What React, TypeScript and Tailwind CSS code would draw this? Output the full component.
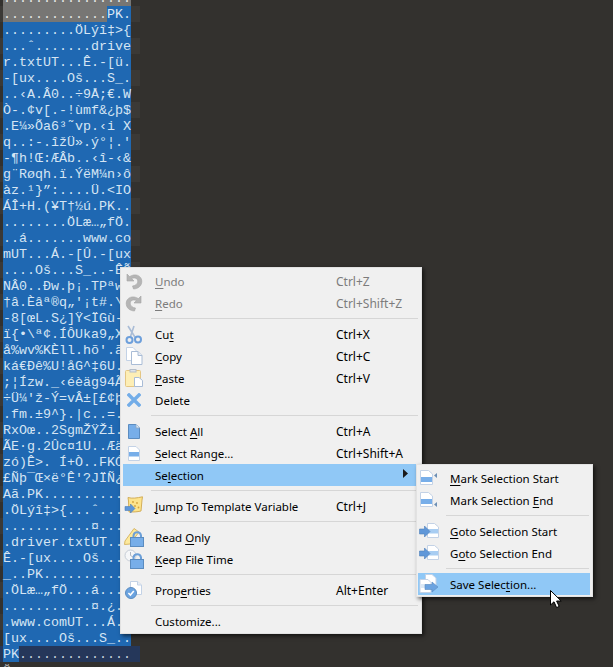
import React from "react";

const rows = [
  "................",
  ".............PK.",
  ".........ÖLýî‡>{",
  "...ˆ.......drive",
  "r.txtUT...Ê.-[ü.",
  "-[ux....Oš...S_.",
  "..‹A.Â0..÷9Å;€.W",
  "Ò-.¢v[.-!ùmf&¿þ$",
  ".E¼»Õa6³˜vp.‹i X",
  "q..:-.îžÜ».ý°¦.'",
  "-¶h!Œ:ÆÂb..‹î-‹&",
  "g¨Røqh.ï.ÝëM¼n›ô",
  "àz.¹}”:....Ü.<IO",
  "ÁÎ+H.(¥T†½ú.PK..",
  "........ÖLæ…„fÖ.",
  "..á.......www.co",
  "mUT...Á.-[Û.-[ux",
  "....Oš...S_..-ÊÕ",
  "NÂ0..Ðw.þ¡.TPªw.",
  "†â.Èâª®q„'¡t#.\\.",
  "-8[œL.S¿]Ÿ<ÏGù-.",
  "ï{•\\ª¢.ÍÔUka9„X.",
  "å%wv%KÈll.hõ'.ã.",
  "ká€Ðê%U!åG^‡6U..",
  ";¦Ízw._‹éèäg94Ã",
  "÷Ü¼'ž-Ý=vÂ±[£¢þ",
  ".fm.±9^}.|c..=..",
  "RxOœ..2SgmŽŸŽi..",
  "ÃE·g.2Ûc¤1U..Æä",
  "zó)Ê>. Í+Ò..FKÓ.",
  "£Ñþ¯Œ×ë°Ê'?JÏÑ¿",
  "Aã.PK...........",
  ".ÖLýî‡>{...ˆ....",
  "...........¤....",
  ".driver.txtUT...",
  "Ê.-[ux....Oš....",
  "_..PK...........",
  ".ÖLæ…„fÖ...á....",
  "...........¤.¿..",
  ".www.comUT...Á.-",
  "[ux....Oš...S_..",
];

function HexRow({ text, index }: { text: string; index: number }) {
  const striped = index % 2 === 1;
  let body: React.ReactNode;
  if (index === 0) {
    body = <span className="block h-4 w-[128px] bg-[#777674] text-[#e6e6e6]">{text}</span>;
  } else if (index === 1) {
    body = (
      <span className="flex h-4 w-[128px]">
        <span className="bg-[#777674] text-[#e6e6e6]">{text.slice(0, 13)}</span>
        <span className="bg-[#1f68b2] text-[#dbe9f6]">{text.slice(13)}</span>
      </span>
    );
  } else {
    body = <span className="block h-4 w-[128px] bg-[#1f68b2] text-[#d5e5f4]">{text}</span>;
  }
  return (
    <div className={`h-4 w-[140px] pl-[3px] ${striped ? "bg-[#3b3936]" : ""}`}>{body}</div>
  );
}

const P = "#c3d2e6";

function Undo({ flip }: { flip?: boolean }) {
  return (
    <svg width="18" height="18" viewBox="0 0 18 18" style={flip ? { transform: "scaleX(-1)" } : undefined}>
      <path d="M2 2 L2 9 L9 9 L6.6 6.6 C9 5.2 12.6 6 12.8 9 C13 11.8 10.5 13.6 7.5 14 L8.5 17 C13 16.8 17 14 16.8 9 C16.5 3.4 10 1 4.6 4.6 Z" fill="#b5b5b5" stroke="#a4a4a4" strokeWidth="0.6" />
    </svg>
  );
}
function Cut() {
  return (
    <svg width="18" height="19" viewBox="0 0 18 19" fill="none">
      <path d="M3 1 L10.5 13 M9 1 L5 13" stroke="#a9bcd6" strokeWidth="1.6" />
      <circle cx="4.5" cy="15" r="3" stroke="#6d9fdb" strokeWidth="2" />
      <circle cx="13" cy="14.5" r="3" stroke="#6d9fdb" strokeWidth="2" />
    </svg>
  );
}
function Copy() {
  return (
    <svg width="18" height="18" viewBox="0 0 18 18">
      <path d="M1.5 0.5 H8 L11 3.5 V13.5 H1.5 Z" fill="#fff" stroke={P} />
      <path d="M6.5 4.5 H13 L17 8.5 V17.5 H6.5 Z" fill="#fff" stroke="#a9bcd6" />
      <path d="M13 4.5 V8.5 H17" fill="#e5ebf3" stroke="#a9bcd6" />
    </svg>
  );
}
function Paste() {
  return (
    <svg width="18" height="18" viewBox="0 0 18 18">
      <rect x="0.5" y="1.5" width="15" height="16" rx="1" fill="#fdeeb5" stroke="#e4c684" />
      <rect x="5" y="0.5" width="6" height="2.5" fill="#dfe4ea" stroke="#b4bdc9" />
      <path d="M9.5 8.5 H14 L17.5 11.5 V17.5 H9.5 Z" fill="#fff" stroke="#a9bcd6" />
    </svg>
  );
}
function Delete() {
  return (
    <svg width="14" height="14" viewBox="0 0 14 14">
      <path d="M2 2 L12 12 M12 2 L2 12" stroke="#73ade8" strokeWidth="3.4" strokeLinecap="square" />
    </svg>
  );
}
function PageBlue() {
  return (
    <svg width="12" height="15" viewBox="0 0 12 15">
      <path d="M0.5 0.5 H8 L11.5 4 V14.5 H0.5 Z" fill="#77aee9" stroke="#5b8cc0" />
      <path d="M8 0.5 V4 H11.5" fill="#e8f0f8" stroke="#8aa7c7" />
    </svg>
  );
}
function PageRange() {
  return (
    <svg width="12" height="15" viewBox="0 0 12 15">
      <path d="M0.5 0.5 H8 L11.5 4 V14.5 H0.5 Z" fill="#fff" stroke={P} />
      <rect x="1" y="6" width="10" height="4.5" fill="#77aee9" />
    </svg>
  );
}
function Jump() {
  return (
    <svg width="20" height="20" viewBox="0 0 20 20">
      <path d="M4 1.5 C8 2.8 13 2 18.5 0.8 L18 4 L17 15 C13 16 9.5 16 5 16 L4.5 5 Z" fill="#fde48c" stroke="#d3ae58" />
      <circle cx="9" cy="6" r="0.9" fill="#d4a33c" />
      <circle cx="13" cy="7" r="0.9" fill="#d4a33c" />
      <circle cx="11" cy="10" r="0.9" fill="#d4a33c" />
      <circle cx="14.5" cy="11.5" r="0.9" fill="#d4a33c" />
      <path d="M6.5 8 L11 12.5 L6.5 17 V14.5 H1 V10.5 H6.5 Z" fill="#5f97d9" stroke="#4f7fb8" strokeWidth="0.6" />
    </svg>
  );
}
function Lock() {
  return (
    <>
      <path d="M9.5 11 V8.5 A3.8 3.8 0 0 1 17 8.5 V11" fill="none" stroke="#6b9fd8" strokeWidth="2" />
      <rect x="6.5" y="10.5" width="13" height="9" fill="#77aee9" stroke="#5b8cc0" />
    </>
  );
}
function ReadOnly() {
  return (
    <svg width="20" height="20" viewBox="0 0 20 20">
      <path d="M1 14 L10 1.5 L15 5 L6 17 L0.5 17.5 Z" fill="#fde99c" stroke="#d8b868" />
      <Lock />
    </svg>
  );
}
function KeepTime() {
  return (
    <svg width="20" height="20" viewBox="0 0 20 20">
      <circle cx="6.5" cy="6.5" r="5.5" fill="#f5f6f8" stroke="#c6cdd6" />
      <path d="M6.5 3 V6.5 L9 8" fill="none" stroke="#aeb7c2" />
      <Lock />
    </svg>
  );
}
function Props() {
  return (
    <svg width="18" height="18" viewBox="0 0 18 18">
      <path d="M5.5 0.5 H12.5 L16.5 4 V13.5 H5.5 Z" fill="#fff" stroke={P} />
      <path d="M12.5 0.5 V4 H16.5" fill="#e8eef5" stroke={P} />
      <circle cx="6" cy="12" r="5.5" fill="#6ba3e0" stroke="#5b8cc0" />
      <path d="M3.4 12 L5.4 14 L8.8 10" fill="none" stroke="#fff" strokeWidth="1.6" />
    </svg>
  );
}
function Mark({ end }: { end?: boolean }) {
  return (
    <svg width="18" height="16" viewBox="0 0 18 16">
      <path d="M0.5 0.5 H8.5 L12.5 4 V14.5 H0.5 Z" fill="#fff" stroke={P} />
      <rect x="1" y="7" width="11" height="5" fill="#77aee9" />
      <path d={end ? "M17 10 V15 L14 12.5 Z" : "M17 3 V8 L14 5.5 Z"} fill="#6d8fb5" />
    </svg>
  );
}
function Goto() {
  return (
    <svg width="20" height="16" viewBox="0 0 20 16">
      <path d="M8.5 0.5 H15.5 L19.5 4 V14.5 H8.5 Z" fill="#fff" stroke={P} />
      <rect x="9" y="6" width="10" height="4.5" fill="#a8cdf2" />
      <path d="M5.5 3 L11 8.5 L5.5 14 V11 H0.5 V6 H5.5 Z" fill="#5f97d9" stroke="#4f7fb8" strokeWidth="0.6" />
    </svg>
  );
}
function Save() {
  return (
    <svg width="20" height="20" viewBox="0 0 20 20">
      <path d="M6.5 0.5 H13 L17 4 V12.5 H6.5 Z" fill="#fff" stroke={P} />
      <path d="M1 5.5 H9 L12 8.5 V18.5 H1 Z" fill="#fff" stroke={P} />
      <rect x="1.5" y="10" width="10" height="4" fill="#dbe8f5" />
      <path d="M13 8 L19 13 L13 18 V15.5 H6 V10.5 H13 Z" fill="#6ba3e0" stroke="#5b8cc0" strokeWidth="0.6" />
    </svg>
  );
}

function Item({
  icon,
  children,
  shortcut,
  disabled,
  active,
  arrow,
}: {
  icon?: React.ReactNode;
  children: React.ReactNode;
  shortcut?: string;
  disabled?: boolean;
  active?: boolean;
  arrow?: boolean;
}) {
  return (
    <div
      className={`relative flex h-[22px] items-center ${active ? "bg-[#90c8f6]" : ""} ${
        disabled ? "text-[#7c7c7c]" : "text-black"
      }`}
    >
      <div className="flex h-full w-[32px] shrink-0 items-center justify-center pr-[10px]">{icon}</div>
      <div className="w-[181px] shrink-0 whitespace-nowrap pt-px text-[11.5px]">{children}</div>
      {shortcut && <div className="whitespace-nowrap pt-px">{shortcut}</div>}
      {arrow && (
        <svg className="absolute right-[11px] top-[5px]" width="5" height="9" viewBox="0 0 5 9">
          <path d="M0 0 L5 4.5 L0 9 Z" fill="#1a1a1a" />
        </svg>
      )}
    </div>
  );
}

function Sep() {
  return (
    <div className="flex h-[9px] items-center pl-[28px] pr-[1px]">
      <div className="h-px w-full bg-[#d6d6d6]" />
    </div>
  );
}

function U({ children }: { children: React.ReactNode }) {
  return <span className="underline decoration-1 underline-offset-[2px]">{children}</span>;
}

export default function App() {
  return (
    <div
      className="relative h-[667px] w-[613px] overflow-hidden bg-[#33312e] text-[12px] leading-none"
      style={{ fontFamily: '"Noto Sans", sans-serif' }}
    >
      <div
        className="-mt-[10px] whitespace-pre text-[13.33px] leading-[18px]"
        style={{ fontFamily: '"Liberation Mono", monospace' }}
      >
        {rows.map((r, i) => (
          <HexRow key={i} text={r} index={i} />
        ))}
        <div className="flex h-4 w-[140px] bg-[#25375a] pl-[3px]">
          <span className="bg-[#1f68b2] text-[#d5e5f4]">PK</span>
          <span className="text-[#c9d2df]">..............</span>
        </div>
        <div className="h-4 pl-[3px] text-[#a8a8a8]">Ö</div>
      </div>

      <div className="absolute left-[120px] top-[267px] h-[367px] w-[302px] border border-[#e2e2e2] bg-[#f0f0f0] py-[2px] pl-[2px] pr-[2px] shadow-[2px_2px_4px_rgba(0,0,0,0.6)]">
        <Item disabled icon={<Undo />} shortcut="Ctrl+Z"><U>U</U>ndo</Item>
        <Item disabled icon={<Undo flip />} shortcut="Ctrl+Shift+Z"><U>R</U>edo</Item>
        <Sep />
        <Item icon={<Cut />} shortcut="Ctrl+X">Cu<U>t</U></Item>
        <Item icon={<Copy />} shortcut="Ctrl+C"><U>C</U>opy</Item>
        <Item icon={<Paste />} shortcut="Ctrl+V"><U>P</U>aste</Item>
        <Item icon={<Delete />}>Delete</Item>
        <Sep />
        <Item icon={<PageBlue />} shortcut="Ctrl+A">Select <U>A</U>ll</Item>
        <Item icon={<PageRange />} shortcut="Ctrl+Shift+A"><U>S</U>elect Range...</Item>
        <Item active arrow>Se<U>l</U>ection</Item>
        <Sep />
        <Item icon={<Jump />} shortcut="Ctrl+J"><U>J</U>ump To Template Variable</Item>
        <Sep />
        <Item icon={<ReadOnly />}>Read <U>O</U>nly</Item>
        <Item icon={<KeepTime />}><U>K</U>eep File Time</Item>
        <Sep />
        <Item icon={<Props />} shortcut="Alt+Enter">Prop<U>e</U>rties</Item>
        <Sep />
        <Item>Customize...</Item>
      </div>

      <div className="absolute left-[416px] top-[464px] h-[133px] w-[177px] border border-[#e2e2e2] bg-[#f0f0f0] py-[2px] pl-[1px] pr-[2px] shadow-[2px_2px_4px_rgba(0,0,0,0.6)]">
        <Item icon={<Mark />}><U>M</U>ark Selection Start</Item>
        <Item icon={<Mark end />}>Mark Selection <U>E</U>nd</Item>
        <Sep />
        <Item icon={<Goto />}><U>G</U>oto Selection Start</Item>
        <Item icon={<Goto />}>G<U>o</U>to Selection End</Item>
        <Sep />
        <Item active icon={<Save />}>Save Selec<U>t</U>ion...</Item>
      </div>

      <svg className="absolute left-[550px] top-[590px]" width="14" height="19" viewBox="0 0 14 19">
        <path d="M0.5 0.5 V15 L4 11.8 L6.6 17.6 L9.2 16.4 L6.6 11 H11.2 Z" fill="#fff" stroke="#000" />
      </svg>
    </div>
  );
}
